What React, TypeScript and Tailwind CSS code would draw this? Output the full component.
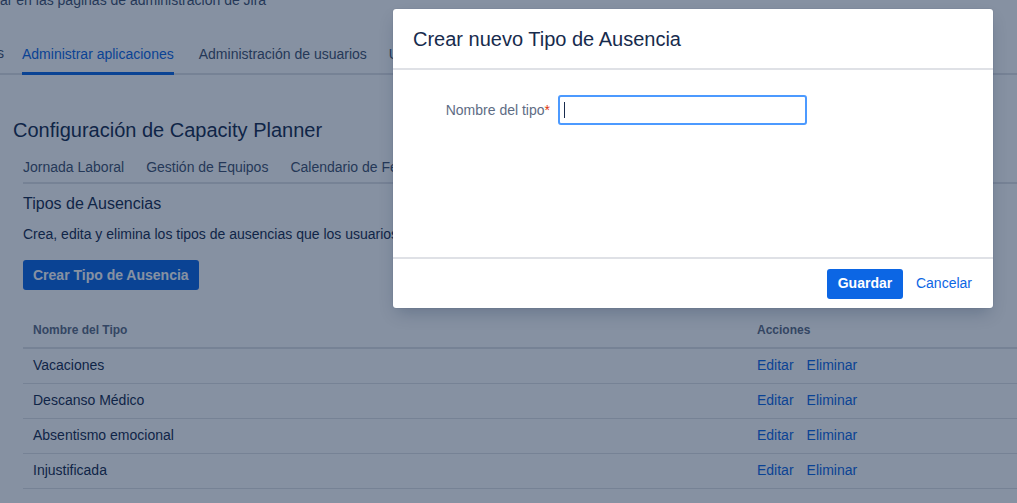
import React from "react";

const rows = ["Vacaciones", "Descanso Médico", "Absentismo emocional", "Injustificada"];

export default function App() {
  return (
    <div className="relative h-[503px] w-full overflow-hidden bg-white text-[14px] text-[#172b4d] font-['Liberation_Sans',Arial,sans-serif]">
      {/* page behind the dialog */}
      <p className="-mt-[10px] h-[20px] leading-[20px] whitespace-nowrap text-[#42526e]">
        ar en las páginas de administración de Jira
      </p>

      <nav className="mt-[33px] flex items-end border-b-2 border-[#dfe1e6]">
        <div className="flex w-[4px] justify-end overflow-hidden">
          <span className="whitespace-nowrap pb-[9px] text-[#42526e]">Sistemas</span>
        </div>
        <a className="-mb-[2px] ml-[18px] border-b-[3px] border-[#0c66e4] pb-[8px] leading-[20px] text-[#0c66e4]">
          Administrar aplicaciones
        </a>
        <a className="ml-[25px] pb-[9px] leading-[20px] text-[#42526e]">Administración de usuarios</a>
        <a className="ml-[22px] pb-[9px] leading-[20px] text-[#42526e]">Usuarios</a>
      </nav>

      <main className="pl-[13px]">
        <h1 className="mt-[43px] text-[20px] leading-[24px]">Configuración de Capacity Planner</h1>

        <div className="ml-[10px]">
          <div className="mt-[15px] flex gap-[22px] border-b-2 border-[#dfe1e6] pb-[5px] text-[#42526e]">
            <span className="leading-[20px]">Jornada Laboral</span>
            <span className="leading-[20px]">Gestión de Equipos</span>
            <span className="leading-[20px]">Calendario de Festivos</span>
            <span className="leading-[20px]">Tipos de Ausencias</span>
          </div>

          <h2 className="mt-[9px] text-[16px] leading-[22px]">Tipos de Ausencias</h2>
          <p className="mt-[9px] leading-[20px]">
            Crea, edita y elimina los tipos de ausencias que los usuarios pueden registrar en Capacity Planner.
          </p>

          <button className="mt-[16px] h-[30px] rounded-[3px] bg-[#0c66e4] px-[10px] font-semibold text-white">
            Crear Tipo de Ausencia
          </button>

          <table className="mt-[23px] w-[1100px] border-collapse text-left">
            <thead>
              <tr className="border-b-2 border-[#dfe1e6] text-[12px] font-bold text-[#5e6c84]">
                <th className="h-[35px] w-[724px] px-[10px] font-bold">Nombre del Tipo</th>
                <th className="h-[35px] px-[10px] font-bold">Acciones</th>
              </tr>
            </thead>
            <tbody>
              {rows.map((r) => (
                <tr key={r} className="border-b border-[#dfe1e6]">
                  <td className="h-[35px] px-[10px]">{r}</td>
                  <td className="h-[35px] px-[10px] text-[#0c66e4]">
                    <span>Editar</span>
                    <span className="ml-[13px]">Eliminar</span>
                  </td>
                </tr>
              ))}
            </tbody>
          </table>
        </div>
      </main>

      {/* blanket */}
      <div className="absolute inset-0 bg-[#091e42]/[0.49]" />

      {/* dialog */}
      <div className="absolute left-[393px] top-[9px] flex h-[299px] w-[600px] flex-col rounded-[3px] bg-white shadow-[0_8px_16px_-4px_rgba(9,30,66,0.25),0_0_1px_rgba(9,30,66,0.31)]">
        <div className="flex h-[61px] items-center border-b-2 border-[#dfe1e6] px-[20px] pt-[1px]">
          <h3 className="text-[20px] leading-[24px] text-[#172b4d]">Crear nuevo Tipo de Ausencia</h3>
        </div>
        <div className="flex-1 px-[20px] pt-[25px]">
          <div className="flex items-center gap-[8px]">
            <label className="w-[137px] text-right text-[#5e6c84]">
              Nombre del tipo<span className="text-[#de350b]">*</span>
            </label>
            <div className="flex h-[30px] w-[249px] items-center rounded-[3px] border-2 border-[#4c9aff] bg-white px-[4px]">
              <span className="h-[16px] w-[1px] bg-[#172b4d]" />
            </div>
          </div>
        </div>
        <div className="flex h-[51px] items-center justify-end gap-[13px] border-t-2 border-[#dfe1e6] pr-[21px]">
          <button className="h-[30px] w-[76px] rounded-[3px] bg-[#0c66e4] font-semibold text-white">Guardar</button>
          <button className="text-[#0c66e4]">Cancelar</button>
        </div>
      </div>
    </div>
  );
}
